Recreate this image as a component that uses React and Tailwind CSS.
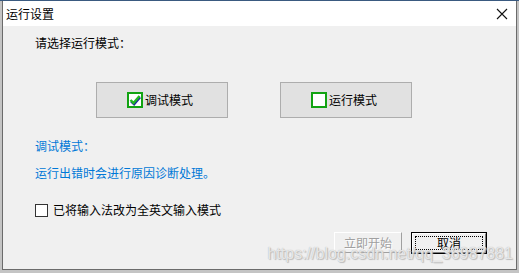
import React from "react";

function GreenCheck({ checked }) {
  return (
    <svg width="16" height="16" viewBox="0 0 16 16" className="shrink-0">
      <rect x="1" y="1" width="14" height="14" fill="#ffffff" stroke="#12a312" strokeWidth="2" />
      {checked && (
        <>
          <path d="M3.5 8.5 L6.5 11.5 L12.5 4.5" fill="none" stroke="#1a2a9c" strokeWidth="2.4" transform="translate(0.6,0.8)" />
          <path d="M3.5 8 L6.5 11 L12.5 4" fill="none" stroke="#22b822" strokeWidth="2.4" />
        </>
      )}
    </svg>
  );
}

export default function App() {
  const font = "font-['Noto_Sans_CJK_SC','Microsoft_YaHei',sans-serif]";
  return (
    <div className={`relative w-[519px] h-[273px] bg-[#c4c4c4] overflow-hidden ${font}`}>
      <div className="h-[1px] bg-[#3a5a80]" />
      <div className="ml-[2px] w-[515px] h-[269px] flex flex-col border-l border-r border-b border-[#6b6b6b]">
        {/* title bar */}
        <div className="h-[25px] bg-white flex items-center justify-between shrink-0">
          <span className="pl-[3px] text-[12px] leading-[16px] text-black">运行设置</span>
          <svg width="12" height="12" viewBox="0 0 12 12" className="mr-[8px] mt-[1px]">
            <path d="M1 1 L11 11 M11 1 L1 11" stroke="#111" strokeWidth="1.1" />
          </svg>
        </div>
        {/* content */}
        <div className="flex-1 bg-[#f0f0f0] flex flex-col pl-[32px] pt-[9px] text-[12px] leading-[16px]">
          <div className="text-black">请选择运行模式：</div>
          <div className="flex gap-[52px] mt-[31px] ml-[61px]">
            <div className="w-[132px] h-[36px] bg-[#e1e1e1] border border-[#adadad] flex items-center justify-center gap-[2px] pr-[4px]">
              <GreenCheck checked />
              <span className="text-black">调试模式</span>
            </div>
            <div className="w-[132px] h-[36px] bg-[#e1e1e1] border border-[#adadad] flex items-center justify-center gap-[2px] pr-[4px]">
              <GreenCheck />
              <span className="text-black">运行模式</span>
            </div>
          </div>
          <div className="mt-[20px] text-[#0078d7]">调试模式：</div>
          <div className="mt-[11px] text-[#0078d7]">运行出错时会进行原因诊断处理。</div>
          <div className="mt-[21px] flex items-center gap-[5px]">
            <div className="w-[13px] h-[13px] bg-white border border-[#333]" />
            <span className="text-black">已将输入法改为全英文输入模式</span>
          </div>
          <div className="mt-[14px] flex justify-end pr-[29px] gap-[9px]">
            <div className="w-[68px] h-[21px] flex items-center justify-center bg-[#f0f0f0] border-t border-l border-white border-r border-b border-r-[#a0a0a0] border-b-[#a0a0a0] text-[#a0a0a0] [text-shadow:1px_1px_0_#ffffff]">
              立即开始
            </div>
            <div className="w-[76px] h-[22px] border border-black">
              <div className="w-full h-full border-t border-l border-white border-r border-b border-r-[#808080] border-b-[#808080] bg-[#f0f0f0] p-[2px]">
                <div className="w-full h-full border border-dotted border-black flex items-center justify-center text-black leading-[12px]">
                  取消
                </div>
              </div>
            </div>
          </div>
        </div>
      </div>
      {/* watermark */}
      <div className="absolute right-[6px] top-[245px] font-['Liberation_Sans',sans-serif] text-[16px] leading-[18px] text-[rgba(255,255,255,0.7)] [text-shadow:0_0_1px_#a8a8a8,1px_1px_1px_#bdbdbd]">
        https://blog.csdn.net/qq_36987881
      </div>
    </div>
  );
}
